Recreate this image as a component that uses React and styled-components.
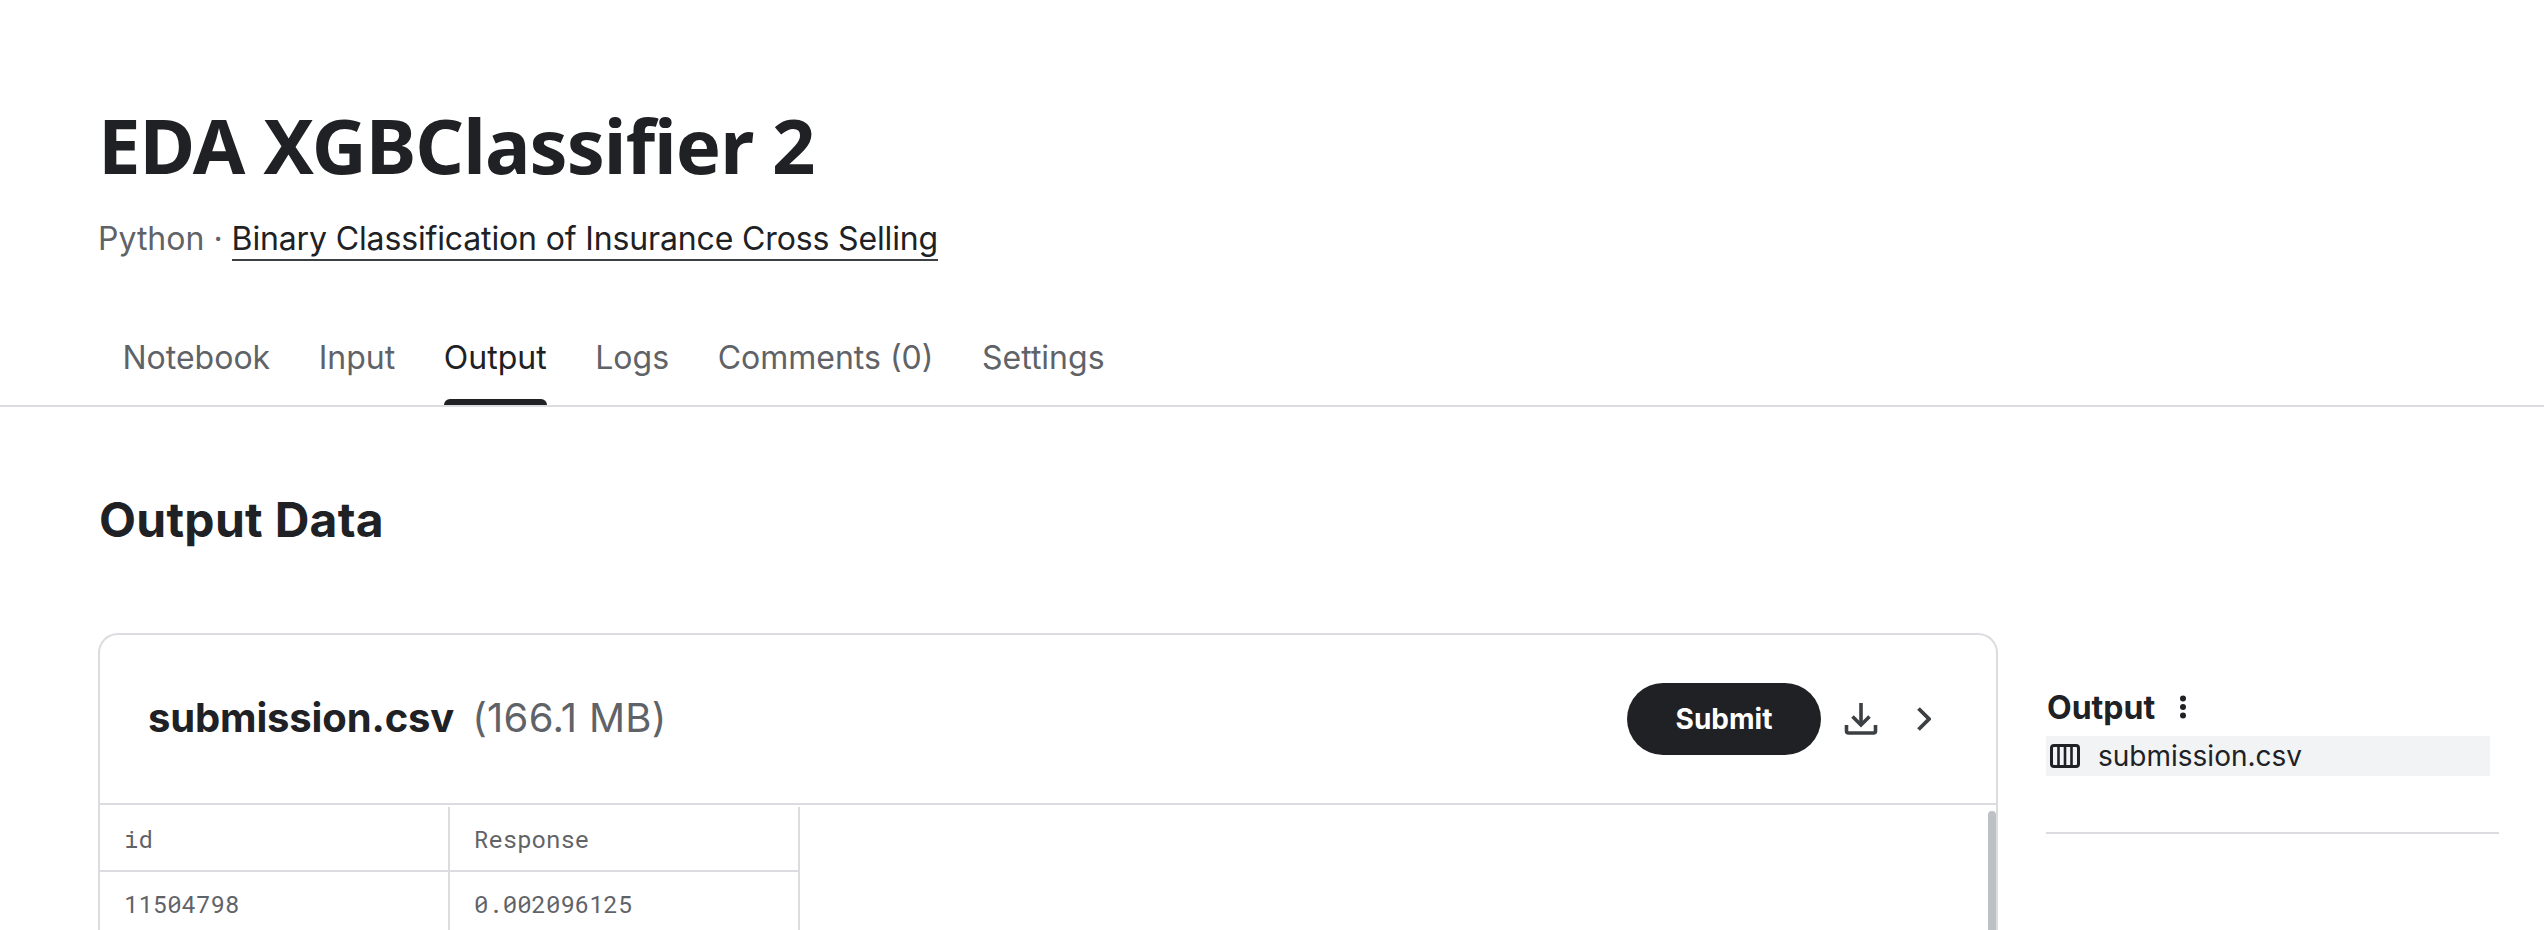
import React from "react";
import styled, { createGlobalStyle } from "styled-components";

const GlobalStyle = createGlobalStyle`
  html, body {
    margin: 0;
    height: 930px;
    overflow: hidden;
    background: #fff;
    font-family: "Inter", "Liberation Sans", sans-serif;
    color: #202124;
  }
  #root { height: 930px; overflow: hidden; }
`;

const Header = styled.header`
  padding: 101px 0 0 98px;
  border-bottom: 2px solid #dadce0;
`;

const Title = styled.h1`
  margin: 0;
  height: 88px;
  font-family: "Noto Sans", sans-serif;
  font-size: 76px;
  line-height: 88px;
  font-weight: 700;
  letter-spacing: -0.95px;
  color: #202124;
`;

const Subtitle = styled.div`
  margin-top: 28px;
  height: 44px;
  font-size: 32px;
  line-height: 44px;
  color: #5f6368;
`;

const CompetitionLink = styled.a`
  color: #202124;
  letter-spacing: -0.14px;
  border-bottom: 2px solid #3c4043;
  padding-bottom: 1px;
`;

const Tabs = styled.nav`
  display: flex;
  gap: 48.6px;
  margin-top: 75px;
  padding-left: 24.5px;
`;

const Tab = styled.div`
  position: relative;
  height: 69px;
  font-size: 32px;
  line-height: 44px;
  color: ${(p) => (p.$active ? "#202124" : "#5f6368")};

  ${(p) =>
    p.$active &&
    `&::after {
      content: "";
      position: absolute;
      left: 0;
      right: 0;
      bottom: 0;
      height: 6px;
      background: #202124;
      border-radius: 6px 6px 0 0;
    }`}
`;

const Body = styled.div`
  padding: 0 0 0 98px;
`;

const SectionTitle = styled.h2`
  margin: 0;
  padding: 84px 0 0 1px;
  height: 142px;
  font-size: 48px;
  line-height: 58px;
  font-weight: 700;
  color: #202124;
  letter-spacing: 0.3px;
`;

const Columns = styled.div`
  display: flex;
`;

const Card = styled.section`
  box-sizing: border-box;
  width: 1900px;
  height: 400px;
  flex: none;
  border: 2px solid #dadce0;
  border-bottom: none;
  border-radius: 20px 20px 0 0;
  position: relative;
`;

const CardHeader = styled.div`
  box-sizing: border-box;
  height: 170px;
  display: flex;
  align-items: center;
  padding: 0 65px 0 48px;
  border-bottom: 2px solid #dadce0;
`;

const FileName = styled.span`
  padding-bottom: 3px;
  font-size: 40px;
  font-weight: 700;
  letter-spacing: -0.15px;
  color: #202124;
`;

const FileSize = styled.span`
  padding-bottom: 3px;
  margin-left: 18px;
  font-size: 40px;
  font-weight: 400;
  letter-spacing: 0.3px;
  color: #5f6368;
`;

const Actions = styled.div`
  margin-left: auto;
  display: flex;
  align-items: center;
`;

const SubmitButton = styled.button`
  width: 194px;
  height: 72px;
  border: none;
  border-radius: 36px;
  background: #202124;
  color: #fff;
  font-family: "Inter", sans-serif;
  font-size: 28px;
  font-weight: 700;
`;

const IconButton = styled.span`
  display: flex;
  margin-left: ${(p) => p.$gap}px;
`;

const DataTable = styled.table`
  border-collapse: separate;
  border-spacing: 0;
  table-layout: fixed;
  width: 700px;
  margin-top: 2px;
  font-family: "Roboto Mono", monospace;
  font-size: 24px;
  color: #5f6368;
`;

const Cell = styled.td`
  box-sizing: border-box;
  width: 350px;
  height: ${(p) => p.$h}px;
  padding: 0 0 0 24px;
  font-weight: 400;
  text-align: left;
  border-right: 2px solid #dadce0;
  border-bottom: ${(p) => (p.$head ? "2px solid #dadce0" : "none")};
`;

const Scrollbar = styled.div`
  position: absolute;
  top: 176px;
  right: 0;
  bottom: 0;
  width: 8px;
  border-radius: 4px 4px 0 0;
  background: #bdc1c6;
`;

const Sidebar = styled.aside`
  width: 453px;
  margin-left: 48px;
  padding-top: 52px;
  flex: none;
`;

const SidebarHead = styled.div`
  display: flex;
  align-items: center;
  height: 44px;
  padding-left: 1px;
  font-size: 32px;
  font-weight: 700;
  color: #202124;
`;

const MenuDots = styled.svg`
  margin-left: 22px;
`;

const FileRow = styled.div`
  box-sizing: border-box;
  width: 444px;
  height: 40px;
  margin-top: 7px;
  padding-left: 4px;
  display: flex;
  align-items: center;
  gap: 18px;
  background: #f1f3f4;
  font-size: 28px;
  color: #202124;
`;

const Divider = styled.div`
  margin-top: 56px;
  height: 2px;
  background: #dadce0;
`;

const DownloadIcon = () => (
  <svg width="34" height="32" viewBox="0 0 34 32" fill="none" stroke="#3c4043" strokeWidth="3.6">
    <path d="M17 0v21" />
    <path d="M8.5 13.5l8.5 8.5 8.5-8.5" />
    <path d="M2.5 22v6a2 2 0 0 0 2 2h25a2 2 0 0 0 2-2v-6" />
  </svg>
);

const ChevronIcon = () => (
  <svg width="14" height="24" viewBox="0 0 14 24" fill="none" stroke="#3c4043" strokeWidth="3.8">
    <path d="M1.5 1.5L12 12 1.5 22.5" />
  </svg>
);

const ColumnsIcon = () => (
  <svg width="30" height="24" viewBox="0 0 30 24" fill="none" stroke="#202124" strokeWidth="2.6">
    <rect x="1.5" y="1.5" width="27" height="21" rx="2.5" strokeWidth="3" />
    <path d="M8.5 2v20M15 2v20M21.5 2v20" />
  </svg>
);

const tabs = ["Notebook", "Input", "Output", "Logs", "Comments (0)", "Settings"];

export default function App() {
  return (
    <>
      <GlobalStyle />
      <Header>
        <Title>EDA XGBClassifier 2</Title>
        <Subtitle>
          Python · <CompetitionLink>Binary Classification of Insurance Cross Selling</CompetitionLink>
        </Subtitle>
        <Tabs>
          {tabs.map((t) => (
            <Tab key={t} $active={t === "Output"}>
              {t}
            </Tab>
          ))}
        </Tabs>
      </Header>
      <Body>
        <SectionTitle>Output Data</SectionTitle>
        <Columns>
          <Card>
            <CardHeader>
              <FileName>submission.csv</FileName>
              <FileSize>(166.1 MB)</FileSize>
              <Actions>
                <SubmitButton>Submit</SubmitButton>
                <IconButton $gap={23}>
                  <DownloadIcon />
                </IconButton>
                <IconButton $gap={39}>
                  <ChevronIcon />
                </IconButton>
              </Actions>
            </CardHeader>
            <DataTable>
              <tbody>
                <tr>
                  <Cell as="th" $head $h={65}>
                    id
                  </Cell>
                  <Cell as="th" $head $h={65}>
                    Response
                  </Cell>
                </tr>
                <tr>
                  <Cell $h={64}>11504798</Cell>
                  <Cell $h={64}>0.002096125</Cell>
                </tr>
              </tbody>
            </DataTable>
            <Scrollbar />
          </Card>
          <Sidebar>
            <SidebarHead>
              Output
              <MenuDots width="12" height="24" viewBox="0 0 12 24" fill="#202124">
                <circle cx="6" cy="3.5" r="3" />
                <circle cx="6" cy="12" r="3" />
                <circle cx="6" cy="20.5" r="3" />
              </MenuDots>
            </SidebarHead>
            <FileRow>
              <ColumnsIcon />
              submission.csv
            </FileRow>
            <Divider />
          </Sidebar>
        </Columns>
      </Body>
    </>
  );
}
